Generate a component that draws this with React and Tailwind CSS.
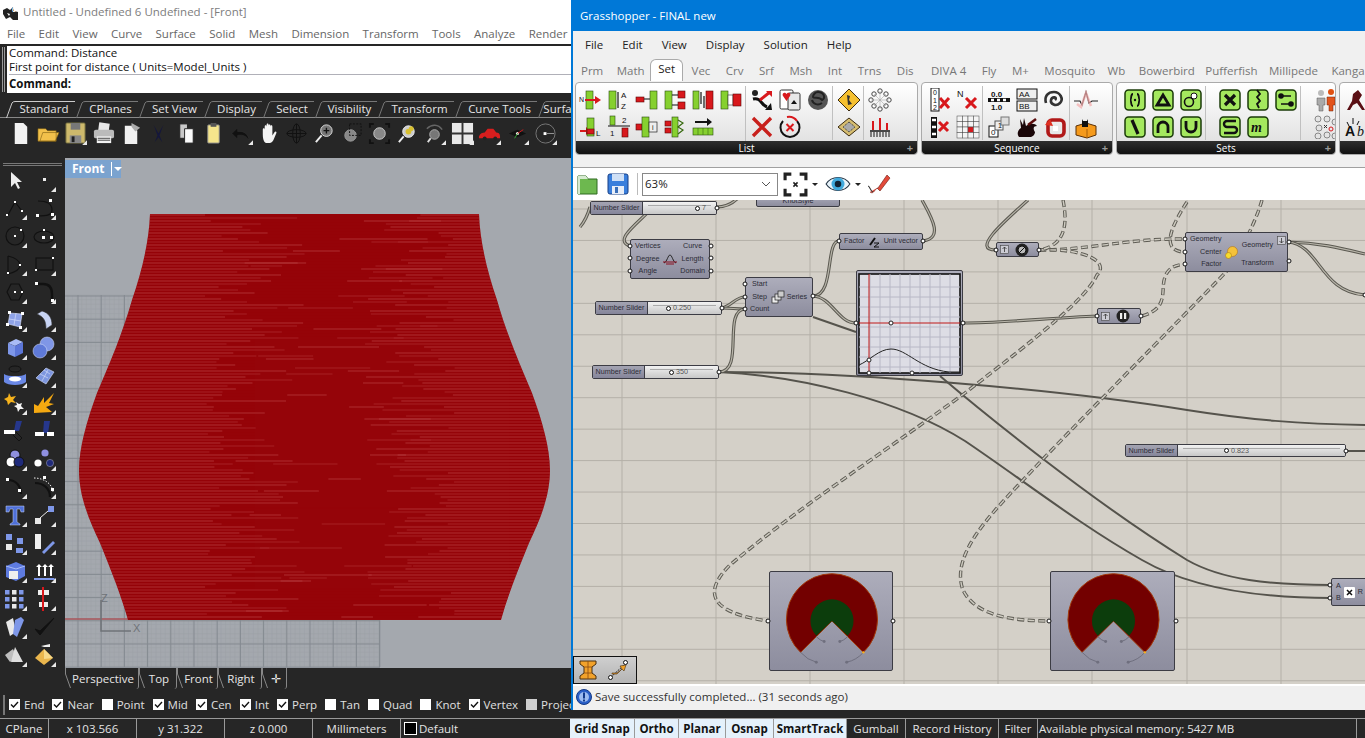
import React from 'react';

const UI = "font-['Open_Sans','Noto_Sans',sans-serif]";
const G = '#86d02f';
const R = '#d8181c';

// small wrapper for toolbar drawings, tri = the flyout corner on rhino buttons
const Ico = ({ children, size = 24, tri }) => (
  <svg width={size} height={size} viewBox="0 0 24 24" className="block">
    {children}
    {tri && <polygon points="24,19 24,24 19,24" fill="#e8e8e8" />}
  </svg>
);

const Txt = ({ x, y, s = 7, f = '#111', w = 400, children }) => (
  <text x={x} y={y} fontSize={s} fill={f} fontWeight={w} fontFamily="Liberation Sans, sans-serif">
    {children}
  </text>
);

const Bar = ({ x, y, w, h, f = G }) => <rect x={x} y={y} width={w} height={h} fill={f} stroke="#2a4a10" strokeWidth="0.6" />;
const Rd = ({ x, y, w, h }) => <rect x={x} y={y} width={w} height={h} fill={R} stroke="#5a0808" strokeWidth="0.6" />;
const Arr = ({ d, c = '#111', w = 1.2 }) => <path d={d} fill="none" stroke={c} strokeWidth={w} />;

/* rhino left sidebar */
const blue = '#7e97e8';
const sideIcons = [
  <path d="M8 4v15l4-4 3 6 2-1-3-6h5z" fill="#eee" />,
  <rect x="11" y="10" width="3" height="3" fill="#eee" />,
  <g><Arr d="M5 19L12 6l7 9" /><rect x="3" y="18" width="2" height="2" fill="#fff" /><rect x="11" y="5" width="2" height="2" fill="#fff" /><rect x="18" y="14" width="2" height="2" fill="#fff" /></g>,
  <g><Arr d="M6 5c10 0 14 4 14 9s-5 6-14 6" /><rect x="4" y="18" width="3" height="3" fill="#fff" /><rect x="17" y="3" width="3" height="3" fill="#fff" /><rect x="19" y="17" width="3" height="3" fill="#fff" /></g>,
  <g><circle cx="12" cy="12" r="9" fill="none" stroke="#111" strokeWidth="1.2" /><rect x="11" y="11" width="2" height="2" fill="#fff" /><rect x="17" y="5" width="2" height="2" fill="#fff" /></g>,
  <g><ellipse cx="12" cy="13" rx="10" ry="6" fill="none" stroke="#111" strokeWidth="1.2" /><rect x="11" y="5" width="2" height="2" fill="#fff" /><rect x="10" y="12" width="3" height="3" fill="#fff" /><rect x="18" y="12" width="3" height="3" fill="#fff" /></g>,
  <g><Arr d="M5 4c8 2 12 5 12 9s-4 7-12 9V4" /><rect x="4" y="20" width="2" height="2" fill="#fff" /><rect x="16" y="12" width="2" height="2" fill="#fff" /></g>,
  <g><rect x="4" y="6" width="17" height="12" fill="none" stroke="#111" strokeWidth="1.2" /><rect x="3" y="17" width="2" height="2" fill="#fff" /><rect x="20" y="5" width="2" height="2" fill="#fff" /></g>,
  <g><path d="M4 12l4-8h8l4 8-4 8H8z" fill="none" stroke="#111" strokeWidth="1.2" /><rect x="11" y="11" width="2" height="2" fill="#fff" /><rect x="18" y="11" width="2" height="2" fill="#fff" /></g>,
  <g><path d="M5 4h6c6 0 9 4 9 10v6" fill="none" stroke="#111" strokeWidth="2.4" /><rect x="3" y="2" width="3" height="3" fill="#fff" /><rect x="19" y="19" width="3" height="3" fill="#fff" /></g>,
  <g><path d="M7 5l12 1-2 13-12-3z" fill="#8fa3e8" stroke="#dfe6ff" strokeWidth="0.6" /><path d="M13 5l-2 12M6 11l12 2" stroke="#dfe6ff" strokeWidth="0.6" /><rect x="5" y="3" width="3" height="3" fill="#fff" /><rect x="18" y="4" width="3" height="3" fill="#fff" /><rect x="3" y="15" width="3" height="3" fill="#fff" /><rect x="16" y="18" width="3" height="3" fill="#fff" /></g>,
  <path d="M5 6l5-3c7 2 10 7 10 14l-6 4c0-8-2-12-9-15z" fill="#c8d4f4" stroke="#333" strokeWidth="0.6" />,
  <g><path d="M5 7l8-4 7 3-8 4z" fill="#a9bcf6" /><path d="M5 7l7 3v11l-7-3z" fill={blue} /><path d="M12 10l8-4v11l-8 4z" fill="#5c76d8" /></g>,
  <g><circle cx="15" cy="8" r="7" fill="#7f96e6" stroke="#dfe6ff" strokeWidth="0.5" /><circle cx="8" cy="15" r="7" fill="#5f7ad8" stroke="#dfe6ff" strokeWidth="0.5" /></g>,
  <g><ellipse cx="12" cy="5" rx="6" ry="3" fill="none" stroke="#111" /><path d="M1 10c4 3 18 3 22 0v8c-4 4-18 4-22 0z" fill="#6a88e6" /><ellipse cx="12" cy="15" rx="6" ry="2.6" fill="#fff" /></g>,
  <g><path d="M4 14l10-10 8 4-8 12z" fill="#7e97e0" stroke="#d8e0fa" strokeWidth="0.6" /><path d="M8 10l8 4M12 6l6 4M10 17l6-11" stroke="#d8e0fa" strokeWidth="0.6" /></g>,
  <g><path d="M6 2l2 4 5-1-3 4 3 3-5-1-3 3-1-4-3-2 4-2z" fill="#f5b21c" /><path d="M13 11l3 2 3-1-1 3 3 3-4 0-2 3-1-4-3-2 3-1z" fill="#f4f4f4" /></g>,
  <path d="M22 2L12 12l0-6-6 9-4-2 0 9 18-1-6-5 8-3-5-1z" fill="#f5a911" />,
  <g><path d="M13 2h6l-3 10h-5z" fill="#26378c" /><rect x="1" y="11" width="11" height="4" fill="#fff" /><path d="M13 13l6 6-3 3-6-6" fill="none" stroke="#111" /></g>,
  <g><path d="M12 2h6l-2 12h-5z" fill="#26378c" /><rect x="3" y="13" width="9" height="4" fill="#fff" /><rect x="15" y="13" width="7" height="4" fill="#fff" /></g>,
  <g><circle cx="12" cy="8" r="5" fill="#8f8fe0" stroke="#111" /><circle cx="8" cy="15" r="5" fill="#fff" stroke="#111" /><circle cx="16" cy="15" r="5" fill="#1f2a7a" stroke="#111" /></g>,
  <g><circle cx="13" cy="6" r="3.6" fill="#8f8fe0" /><circle cx="6" cy="16" r="3.6" fill="#fff" /><circle cx="18" cy="16" r="3.6" fill="#1f2a7a" stroke="#aab" strokeWidth="0.5" /></g>,
  <g><Arr d="M5 5c8 0 13 6 13 14" w={2.2} /><rect x="3" y="3" width="3" height="3" fill="#fff" /><rect x="15" y="14" width="3" height="3" fill="#fff" /></g>,
  <g><Arr d="M3 8c8 0 15 5 15 14" w={2.2} /><path d="M2 3c10 0 19 6 19 15" fill="none" stroke="#eee" strokeDasharray="1.5 1.5" /><rect x="11" y="1" width="3" height="3" fill="#fff" /><rect x="19" y="13" width="3" height="3" fill="#fff" /></g>,
  <g><path d="M3 3h18v6h-3l-1-3h-3v13l3 2v1H7v-1l3-2V6H7L6 9H3z" fill="#4f70d8" stroke="#c8d4f4" strokeWidth="0.5" /></g>,
  <g><rect x="3" y="15" width="6" height="6" fill="#e8e8e8" /><rect x="16" y="3" width="6" height="6" fill={blue} /><path d="M8 15l8-7" stroke="#eee" /></g>,
  <g><rect x="3" y="3" width="6" height="6" fill={blue} /><rect x="14" y="7" width="6" height="6" fill={blue} /><rect x="3" y="13" width="6" height="6" fill="#e8e8e8" /><rect x="13" y="17" width="7" height="5" fill={blue} /></g>,
  <g><rect x="3" y="3" width="6" height="15" fill="#f0f0f0" /><path d="M10 21l11-11 2 2-11 11z" fill={blue} /></g>,
  <g><path d="M3 7l10-4 9 4v10l-9 5-10-4z" fill="#5e7be0" /><path d="M3 7l10 3 9-3" fill="none" stroke="#a9bcf6" /><rect x="6" y="12" width="9" height="8" fill="#eee" /></g>,
  <g><path d="M7 5l3 3H8v9H6V8H4zM13 5l3 3h-2v9h-2V8h-2zM19 5l3 3h-2v9h-2V8h-2z" fill="#fff" /><path d="M2 19h20l2 2H2z" fill={blue} /></g>,
  <g>{[3, 10, 17].map((y) => [2, 9, 16].map((x, i) => <rect key={`${x}${y}`} x={x} y={y} width="4.5" height="4.5" fill={i === 1 ? '#e8e8e8' : blue} />))}</g>,
  <g><rect x="6" y="3" width="11" height="5" fill="#eee" /><rect x="7" y="15" width="9" height="5" fill="#eee" /><path d="M11 0v24" stroke={R} strokeWidth="2" /></g>,
  <g><path d="M3 7l7-4 3 14-6 4z" fill="#e8e8e8" /><path d="M12 5l6-3 3 3-7 17-4-3z" fill={blue} /></g>,
  <path d="M3 14l5 6L22 3 8 16z" fill="#111" stroke="#111" />,
  <g><path d="M2 12l8-6 4 8-7 5z" fill="#bdbdbd" /><path d="M12 4l8 15h-12z" fill="#dedede" /></g>,
  <g><path d="M12 6l9 9-9 7-9-7z" fill="#eab64d" /><path d="M12 6l9 9-9 1z" fill="#f7d98a" /><path d="M9 3l9-2v3h-6z" fill="#eee" /></g>,
];

const topIcons = [
  [<path d="M6 1h9l4 4v18H6z" fill="#f2f2f2" />, false],
  [<path d="M1 20V7h8l2 2h9v11zM3 20l3-9h17l-4 9z" fill="#f2c14b" stroke="#7a5a10" strokeWidth="0.6" />, false],
  [<g><rect x="2" y="1" width="20" height="21" rx="1" fill="#cdb96c" stroke="#6f6a3c" /><rect x="7" y="1" width="10" height="7" fill="#777" /><rect x="6" y="14" width="12" height="8" fill="#888" /><rect x="8" y="15" width="3" height="6" fill="#222" /></g>, true],
  [<g><rect x="7" y="1" width="11" height="8" fill="#e8e8e8" transform="rotate(8 12 5)" /><rect x="2" y="8" width="21" height="9" rx="2" fill="#bbb" /><rect x="5" y="15" width="15" height="7" fill="#f2f2f2" /><path d="M6 17h13M6 19h13" stroke="#444" /></g>, false],
  [<g><path d="M5 4h8l5 5v14H5z" fill="#f0f0f0" /><path d="M12 1l9 5-5 4-4-5z" fill="#aaa" /></g>, false],
  [<path d="M7 3l5 9 5-9-4 11 3 7-4-5-4 5 3-7z" fill="#14163c" />, false],
  [<g><path d="M5 2h8v15H5z" fill="#c8c8c8" stroke="#222" /><path d="M10 7h9v15h-9z" fill="#fafafa" stroke="#222" /></g>, false],
  [<g><rect x="6" y="3" width="12" height="19" rx="1" fill="#f5e58c" stroke="#888" /><rect x="9" y="1" width="6" height="4" fill="#555" /></g>, false],
  [<path d="M2 12l6-6v4c7-1 11 3 12 9-3-4-6-6-12-5v4z" fill="#111" stroke="#333" strokeWidth="0.5" />, true],
  [<path d="M5 14V8c0-2 2-2 2 0V5c0-2 2-2 2 0V3c0-2 2-2 2 0v1c0-2 2-2 2 0v1c0-2 2-2 2 0v9l2-3c1-2 3-1 2 1l-3 7c-1 2-3 3-5 3H9c-2 0-4-3-4-9z" fill="#f4f4f4" />, false],
  [<g><ellipse cx="12" cy="12" rx="10" ry="4" fill="none" stroke="#111" /><ellipse cx="12" cy="12" rx="4" ry="10" fill="none" stroke="#111" /><path d="M2 12h20M12 2v20" stroke="#111" /></g>, false],
  [<g><circle cx="14" cy="9" r="6" fill="#777" stroke="#ddd" /><path d="M9 14l-6 7" stroke="#eee" strokeWidth="2" /><path d="M11 9h6M14 6v6" stroke="#111" strokeWidth="1.4" /></g>, false],
  [<g><circle cx="11" cy="14" r="6" fill="#888" stroke="#999" /><rect x="10" y="2" width="12" height="12" fill="none" stroke="#111" strokeDasharray="2 1.5" /></g>, false],
  [<g><circle cx="12" cy="12" r="6" fill="#888" stroke="#ccc" /><path d="M2 6V2h4M22 6V2h-4M2 18v4h4M22 18v4h-4" fill="none" stroke="#111" strokeWidth="2" /></g>, false],
  [<g><circle cx="13" cy="10" r="6" fill="#ccc" stroke="#eee" /><circle cx="13" cy="10" r="3" fill="#d8c030" /><circle cx="16" cy="7" r="2.6" fill="#d8c030" /><path d="M8 15l-5 6" stroke="#eee" strokeWidth="2" /></g>, false],
  [<g><path d="M4 7c5-5 12-5 16 1" fill="none" stroke="#666" strokeWidth="1.5" /><circle cx="12" cy="13" r="5" fill="#777" stroke="#aaa" /><path d="M8 17l-3 4" stroke="#ddd" strokeWidth="2" /></g>, true],
  [<g><rect x="1" y="1" width="22" height="22" fill="#e8e8e8" /><path d="M12 1v22M1 12h22" stroke="#333" strokeWidth="2" /></g>, true],
  [<g><path d="M1 15c1-3 4-4 6-4l3-4h6l3 4c2 0 4 1 4 4v2H1z" fill="#d81e1e" /><circle cx="7" cy="17" r="2" fill="#222" /><circle cx="18" cy="17" r="2" fill="#222" /></g>, true],
  [<g><path d="M3 12l9-4 9 4-9 4z" fill="#111" /><circle cx="12" cy="12" r="1.6" fill="#eee" /><path d="M12 12l6-4" stroke={R} /><path d="M12 12l-3 5" stroke="#3a3" /></g>, true],
  [<g><circle cx="12" cy="12" r="10" fill="none" stroke="#777" /><rect x="10" y="10.6" width="3" height="3" fill="#fff" /><path d="M13 12h8" stroke="#999" /></g>, true],
];

/* grasshopper ribbon */
const Tile = ({ children }) => (
  <g>
    <rect x="2" y="2" width="20" height="20" rx="3.5" fill="#a4e85e" stroke="#1a3a08" strokeWidth="1.5" />
    {children}
  </g>
);

const listIcons = [
  [
    <g><Txt x="0" y="14" s={7}>N</Txt><Bar x="7" y="3" w="7" h="18" /><path d="M6 11h10V8l6 4-6 4v-3H6z" fill={R} /></g>,
    <g><Bar x="2" y="3" w="7" h="18" /><Txt x="14" y="10" s={8}>A</Txt><Txt x="14" y="21" s={8}>Z</Txt><Arr d="M11 4v16" /></g>,
    <g><Rd x="1" y="9" w="8" h="5" /><Arr d="M9 11h6" /><Bar x="15" y="3" w="7" h="18" /></g>,
    <g><Bar x="2" y="3" w="7" h="18" /><Rd x="15" y="3" w="7" h="7" /><Rd x="15" y="14" w="7" h="7" /><Arr d="M9 7h6M9 17h6" /></g>,
    <g><Bar x="2" y="3" w="6" h="18" /><Arr d="M10 4v12M13 8v12" /><Rd x="15" y="3" w="7" h="18" /></g>,
    <g><Bar x="2" y="3" w="7" h="18" /><rect x="9" y="7" width="5" height="10" fill="#fff" stroke="#333" strokeWidth="0.6" /><Rd x="14" y="6" w="8" h="12" /></g>,
  ],
  [
    <g><path d="M1 15h6v-3l5 4-5 4v-3H1z" fill={R} /><Bar x="8" y="3" w="7" h="18" /><Rd x="8" y="14" w="7" h="5" /><Txt x="17" y="21" s={8}>L</Txt></g>,
    <g><Bar x="3" y="1" w="5" h="9" /><Txt x="15" y="8" s={8}>2</Txt><Arr d="M1 11h22" /><Txt x="3" y="21" s={8}>1</Txt><Rd x="15" y="13" w="6" h="9" /></g>,
    <g><Rd x="1" y="9" w="6" h="6" /><Bar x="7" y="2" w="7" h="20" /><rect x="14" y="7" width="8" height="10" fill="#eee" stroke="#222" strokeWidth="0.7" /><Txt x="17" y="15" s={7}>i</Txt></g>,
    <g><Rd x="2" y="6" w="6" h="5" /><Rd x="2" y="13" w="6" h="5" /><Bar x="9" y="2" w="6" h="20" /><Arr d="M15 5l5 3-5 4 5 3-5 4" c="#386a10" /></g>,
    <g><path d="M4 6h12V3l5 4-5 4V8H4z" fill="#111" /><Bar x="2" y="13" w="20" h="7" /><path d="M7 13v7M12 13v7M17 13v7" stroke="#3a6a12" strokeWidth="0.6" /></g>,
  ],
];
const listB = [
  [
    <g><circle cx="5" cy="5" r="3" fill="#222" /><path d="M3 11c8-2 8 6 14 8" fill="none" stroke="#111" strokeWidth="3" /><path d="M10 12L20 4" stroke={R} strokeWidth="3" /><path d="M16 3h6v6z" fill={R} /><path d="M15 22l7 0-1-7z" fill="#111" /></g>,
    <g><rect x="2" y="2" width="13" height="19" rx="1.5" fill="#fff" stroke="#333" /><rect x="10" y="5" width="12" height="17" rx="1.5" fill="#e8e8e8" stroke="#333" /><path d="M8.5 6c-2-3-5 0-3.500 2l3.500 5 3.500-5c1.500-2-1.500-5-3.500-2z" fill={R} /><path d="M16 12l3 4h-6z" fill="#111" /></g>,
    <g><circle cx="12" cy="12" r="10" fill="#555" /><path d="M12 4c6 0 8 6 4 8-3-4-8-1-9-3 0-2 2-5 5-5zM6 12c1 4 6 6 10 3" fill="none" stroke="#222" strokeWidth="2" /></g>,
  ],
  [
    <path d="M3 3l18 18M21 3L3 21" stroke="#c8201c" strokeWidth="3.4" />,
    <g><path d="M5 6a9.500 9.500 0 1 0 14 0" fill="none" stroke="#111" strokeWidth="2" /><path d="M9 2a10 10 0 0 1 10 4" fill="none" stroke={R} strokeWidth="2" /><path d="M8.500 9l7 7M15.500 9l-7 7" stroke={R} strokeWidth="2" /></g>,
  ],
];
const yellowDiamond = <g><path d="M12 1l11 11-11 11L1 12z" fill="#f5c030" stroke="#3a2a10" /><path d="M10 7l3 1-1 4 3 4-4 1z" fill="#333" /></g>;
const tanBox = <g><path d="M12 3l11 9-11 9L1 12z" fill="#d6bd70" stroke="#3a2a10" /><path d="M12 7l6 5-6 5-6-5z" fill="#aaa" stroke="#333" strokeDasharray="1 1" /></g>;
const netDots = <g>{[[12, 3], [18, 6], [21, 12], [18, 18], [12, 21], [6, 18], [3, 12], [6, 6]].map(([x, y]) => <circle key={`${x}-${y}`} cx={x} cy={y} r="2.2" fill="#fff" stroke="#444" />)}<path d="M12 3v18M3 12h18M6 6l12 12M18 6L6 18" stroke="#999" strokeWidth="0.5" /></g>;
const redBars = <g><path d="M5 6v9M12 3v12M19 8v7" stroke={R} strokeWidth="2" /><path d="M2 16h20" stroke="#111" strokeWidth="1.4" /><path d="M3 17v5M6 17v5M9 17v5M12 17v5M15 17v5M18 17v5M21 17v5" stroke="#111" /></g>;

const seqIcons = [
  [
    <g><rect x="3" y="0" width="8" height="23" fill="#fff" stroke="#111" /><Txt x="5" y="7" s={7}>0</Txt><Txt x="5" y="15" s={7}>1</Txt><Txt x="5" y="22" s={7}>2</Txt><path d="M12 10l9 10M21 10l-9 10" stroke={R} strokeWidth="3" /></g>,
    <g><Txt x="1" y="9" s={9}>N</Txt><path d="M10 10l10 10M20 10L10 20" stroke={R} strokeWidth="3" /></g>,
    <g><Txt x="4" y="9" s={8} w={700}>0.0</Txt><rect x="1" y="10" width="22" height="4" fill="#111" /><path d="M4 12h3M10 12h3M16 12h3" stroke="#fff" strokeWidth="2.5" /><Txt x="4" y="22" s={8} w={700}>1.0</Txt></g>,
    <g><rect x="2" y="1" width="20" height="10" fill="#eee" stroke="#111" /><rect x="2" y="13" width="20" height="10" fill="#eee" stroke="#111" /><Txt x="4" y="9" s={8}>AA</Txt><Txt x="4" y="21" s={8}>BB</Txt></g>,
    <g><path d="M12 12c3-3-3-4-4 0s5 7 9 3 0-11-6-11S1 8 3 15" fill="none" stroke="#333" strokeWidth="2.6" /></g>,
  ],
  [
    <g><rect x="3" y="2" width="6" height="21" fill="#111" /><path d="M4 5h4M4 12h4M4 19h4" stroke="#fff" strokeWidth="2.5" /><path d="M11 7l9 9M20 7l-9 9" stroke={R} strokeWidth="3" /></g>,
    <g>{[0, 1, 2, 3].map((i) => [0, 1, 2, 3].map((j) => <rect key={`${i}${j}`} x={1 + i * 5.500} y={1 + j * 5.500} width="5.500" height="5.500" fill={i === 2 && j === 2 ? R : '#f4f4f4'} stroke="#444" strokeWidth="0.5" />))}</g>,
    <g><rect x="2" y="11" width="9" height="11" fill="#fff" stroke="#111" /><rect x="8" y="6" width="8" height="9" fill="#eee" stroke="#555" /><rect x="14" y="2" width="8" height="8" fill="#ddd" stroke="#777" /><Txt x="4" y="20" s={8}>0</Txt><Txt x="11" y="13" s={7}>1</Txt></g>,
    <g><path d="M4 22c-3-4 0-8 2-9L5 4l3 6 1-7 2 8c4-3 9-3 11 0-4 0-4 3-2 6 0 3-3 5-5 5z" fill="#1a0608" /><path d="M13 10l8-6" stroke="#5a0a0a" strokeWidth="2.500" /></g>,
    <g><rect x="5" y="5" width="16" height="16" rx="4" fill="none" stroke="#b01818" strokeWidth="3.600" /><path d="M2 10l5-6 3 7z" fill="#e03020" /><path d="M10 11h5v5h-5z" fill="#fff" /></g>,
  ],
];
const wave = <g><path d="M0 13h6l2 4 4-13 3 11 3-2h6" fill="none" stroke="#222" strokeWidth="1.200" /><path d="M3 16l4 3 5-14 5 13" fill="none" stroke="#f4aaaa" strokeWidth="2.500" opacity="0.7" /></g>;
const catBox = <g><path d="M2 11l10-3 10 3v9l-9 3-11-3z" fill="#f59a1c" stroke="#5a3008" /><path d="M13 14v9" stroke="#a86008" /><path d="M8 4l1 2h4l1-2v8H8z" fill="#111" /></g>;

const G1 = <path d="M10 6c-3 0-1 6-3 6 2 0 0 6 3 6M14 6c3 0 1 6 3 6-2 0 0 6-3 6" fill="none" stroke="#111" strokeWidth="1.800" />;
const setTiles = [
  [
    <Tile>{G1}<circle cx="12" cy="12" r="1.200" fill="#111" /></Tile>,
    <Tile><path d="M12 7l6 10H6z" fill="none" stroke="#111" strokeWidth="2.800" /></Tile>,
    <Tile><circle cx="15" cy="8" r="3" fill="#fff" stroke="#111" /><circle cx="10" cy="14" r="4.500" fill="none" stroke="#111" strokeWidth="1.600" /></Tile>,
    <Tile><path d="M7 7l10 10M17 7L7 17" stroke="#111" strokeWidth="3.200" /></Tile>,
    <Tile><path d="M11 2l3 4-3 3 3 4-3 3 2 4" fill="none" stroke="#111" strokeWidth="1.800" /></Tile>,
    <Tile><path d="M7 8h10M7 16h10" stroke="#111" strokeWidth="1.400" /><circle cx="7" cy="8" r="2.800" fill="#111" /><circle cx="17" cy="16" r="2.800" fill="#111" /></Tile>,
  ],
  [
    <Tile><path d="M9 5l6 14" stroke="#111" strokeWidth="3.200" /></Tile>,
    <Tile><path d="M7 18v-6a5 5 0 0 1 10 0v6" fill="none" stroke="#111" strokeWidth="2.800" /></Tile>,
    <Tile><path d="M7 6v6a5 5 0 0 0 10 0V6" fill="none" stroke="#111" strokeWidth="2.800" /></Tile>,
    <Tile><path d="M18 6H9a3 3 0 0 0 0 6h7a3 3 0 0 1 0 6H6" fill="none" stroke="#111" strokeWidth="2.400" /></Tile>,
    <Tile><text x="5" y="17" fontSize="14" fontStyle="italic" fontWeight="700" fontFamily="Liberation Serif, serif" fill="#111">m</text></Tile>,
  ],
];
const people = <g><circle cx="7" cy="5" r="3" fill="#bbb" /><path d="M3 10h8v7H9v6H5v-6H3z" fill="#aaa" stroke="#555" strokeWidth="0.5" /><circle cx="17" cy="4" r="3" fill="#e05010" /><path d="M13 9h8v8h-2v6h-4v-6h-2z" fill="#e2541c" stroke="#6a2008" strokeWidth="0.5" /></g>;
const dotsX = <g>{[[4, 4], [13, 4], [21, 7], [5, 13], [4, 21], [13, 20], [21, 21]].map(([x, y]) => <circle key={`${x}${y}`} cx={x} cy={y} r="3" fill="#e4e4e4" stroke="#888" />)}<circle cx="17" cy="14" r="2" fill="none" stroke={R} /><path d="M10 10l3 3M13 10l-3 3" stroke="#333" /></g>;

const Cell = ({ children }) => (
  <span className="w-[28px] h-[27px] flex items-center justify-center">
    <Ico size={24}>{children}</Ico>
  </span>
);

const RibbonGroup = ({ rows, cols, sep = true }) => (
  <div className={`flex flex-col ${sep ? 'border-r border-[#c0c0c0]' : ''}`}>
    {rows.map((row, i) => (
      <div key={i} className="flex">
        {row.map((ic, j) => <Cell key={j}>{ic}</Cell>)}
        {Array.from({ length: cols - row.length }).map((_, j) => <span key={j} className="w-[28px]" />)}
      </div>
    ))}
  </div>
);

const Panel = ({ label, className, children }) => (
  <div className={`${className} h-[73px] shrink-0 rounded-[4px] border border-[#aaa] bg-gradient-to-b from-white to-[#dcdcdc] flex flex-col overflow-hidden`}>
    <div className="flex-1 flex pt-[3px] pl-[1px]">{children}</div>
    <div className="h-[13px] bg-gradient-to-b from-[#2e2e2e] to-[#111] rounded-b-[3px] flex items-center justify-center relative text-[10px] text-white leading-none">
      {label}
      {label && <span className="absolute right-[4px] top-[1px] text-[#999] text-[11px] font-bold leading-[11px]">+</span>}
    </div>
  </div>
);

/* canvas pieces */
const Node = ({ className, children }) => (
  <div className={`absolute ${className} rounded-[2px] border border-[#3c3c44] bg-gradient-to-b from-[#adadbb] to-[#8d8d9e] text-[#2c2c36] text-[7.200px] leading-[12.500px] font-['Liberation_Sans',sans-serif]`}>
    {children}
  </div>
);

const Slider = ({ className, value, pct }) => (
  <div className={`absolute ${className} flex rounded-[2px] border border-[#3c3c44] text-[7.200px] leading-none font-['Liberation_Sans',sans-serif] overflow-hidden whitespace-nowrap`}>
    <span className="w-[52px] shrink-0 bg-gradient-to-b from-[#a4a4b2] to-[#85859a] border-r border-[#3c3c44] text-[#2c2c36] flex items-center justify-center">Number Slider</span>
    <span className="flex-1 relative bg-gradient-to-b from-[#f2f2f2] to-[#c8c8c8] flex items-center text-[#555]">
      <span className="absolute left-[5px] right-[5px] top-[3px] border-t border-[#aaa]" />
      <span className={`absolute ${pct} w-[5px] h-[5px] rounded-full border border-[#111] bg-white`} />
      <span className={`absolute ${pct} pl-[7px]`}>{value}</span>
    </span>
  </div>
);

const Gauge = ({ className }) => (
  <Node className={className}>
    <svg width="100%" height="100%" viewBox="0 0 124 100" className="block">
      <path d="M31 82A46.500 46.500 0 1 1 95 82L63 50Z" fill="#730000" stroke="#a33a0a" strokeWidth="1" />
      <path d="M47 65A22 22 0 1 1 79 65L63 50Z" fill="#0c3d0c" />
      <path d="M31 82Q38 90 47 92M95 82Q88 90 78 92M47 66Q51 70 55 71M79 66Q75 70 71 71" fill="none" stroke="#6f6f7e" />
      <g fill="#6f6f7e"><circle cx="47" cy="92" r="1.500" /><circle cx="78" cy="92" r="1.500" /><circle cx="55" cy="71" r="1.500" /><circle cx="71" cy="71" r="1.500" /></g>
      <circle cx="95" cy="82" r="1.200" fill="#f5b021" />
    </svg>
  </Node>
);

const gridXs = [622, 716, 810, 904, 998, 1092, 1187, 1281];
const gridYs = Array.from({ length: 16 }, (_, i) => 209 + i * 31.45);

const dashed = [
  'M1039 250C1090 250 1130 238 1185 239',
  'M1039 250C1085 248 1110 262 1097 275C1085 300 1040 335 965 393C880 455 795 510 730 565C705 590 705 612 768 621',
  'M1187 202C1172 225 1160 250 1183 252',
  'M1142 316C1170 308 1160 290 1165 277C1168 268 1175 265 1185 264',
  'M1262 200C1255 225 1235 262 1225 273C1180 320 1070 430 1025 478C990 515 950 555 963 590C975 615 1010 621 1050 621',
  'M1063 200C1068 225 1065 245 1040 250',
];
const doubled = [
  'M813 296C835 296 825 241 839 241',
  'M923 241C945 238 930 215 922 200',
  'M722 308C732 306 735 297 745 297',
  'M722 308C732 308 735 309 745 309',
  'M719 372C745 372 722 310 745 309',
  'M813 296C832 297 838 323 856 323',
  'M963 323C1000 323 1050 318 1097 316',
  'M1028 200C1000 225 972 250 996 250',
  'M1288 242C1320 243 1340 248 1365 254',
  'M1288 242C1320 245 1320 292 1365 295',
  'M655 205C640 222 612 240 630 246',
  'M717 207C725 207 732 204 738 198',
  'M580 227C586 220 588 214 590 207',
];
const single = [
  'M719 372C850 372 1050 388 1187 410C1250 420 1300 424 1365 425',
  'M719 372C800 376 900 400 965 441C1020 478 1080 525 1142 560C1180 582 1240 598 1331 598',
  'M813 317L856 332',
  'M940 376C980 410 1090 500 1187 560C1222 580 1270 585 1331 585',
  'M1346 451H1365',
];
const ports = [
  [717, 208], [630, 246], [630, 258], [630, 271], [711, 246], [711, 258], [711, 271], [839, 241], [923, 241],
  [722, 308], [745, 284], [745, 297], [745, 309], [813, 296], [856, 323], [963, 323], [719, 372], [996, 250],
  [1039, 250], [1097, 316], [1141, 316], [1185, 239], [1185, 252], [1185, 264], [1289, 242], [1289, 261], [1346, 451],
  [768, 621], [893, 621], [1049, 621], [1176, 621], [1330, 585], [1330, 598], [1365, 295],
];

const Canvas = () => (
  <div className="relative h-[484px] overflow-hidden bg-[#d4d0c8]">
    <svg width="792" height="484" viewBox="573 200 792 484" className="absolute left-0 top-0">
      {gridXs.map((x) => <path key={x} d={`M${x} 200V684`} stroke="#b4b0a8" />)}
      {gridYs.map((y) => <path key={y} d={`M573 ${y}H1365`} stroke="#b4b0a8" />)}
      {single.map((d) => <path key={d} d={d} fill="none" stroke="#55534c" strokeWidth="2" />)}
      {doubled.map((d) => (
        <g key={d}>
          <path d={d} fill="none" stroke="#5a5850" strokeWidth="3.200" />
          <path d={d} fill="none" stroke="#b8b5aa" strokeWidth="1.200" />
        </g>
      ))}
      {dashed.map((d) => (
        <g key={d}>
          <path d={d} fill="none" stroke="#5e5c54" strokeWidth="3.400" strokeDasharray="7 3.500" />
          <path d={d} fill="none" stroke="#cfccc2" strokeWidth="1.400" strokeDasharray="6 4.500" strokeDashoffset="-0.500" />
        </g>
      ))}
    </svg>

    <Slider className="left-[17px] top-[1px] w-[127px] h-[14px]" value="7" pct="left-[52px]" />
    <Slider className="left-[22px] top-[101px] w-[127px] h-[14px]" value="0.250" pct="left-[18px]" />
    <Slider className="left-[19px] top-[165px] w-[127px] h-[14px]" value="350" pct="left-[24px]" />
    <Slider className="left-[552px] top-[244px] w-[221px] h-[13px]" value="0.823" pct="left-[46px]" />

    <Node className="left-[183px] top-[-6px] w-[84px] h-[13px] text-center leading-[11px]">KnotStyle</Node>

    <Node className="left-[57px] top-[39px] w-[80px] h-[40px] flex justify-between px-[4px]">
      <div className="text-center"><div>Vertices</div><div>Degree</div><div>Angle</div></div>
      <svg width="14" height="12" viewBox="0 0 14 12" className="self-center"><path d="M1 10C4 9 5 2 7 2s3 7 6 8" fill="none" stroke="#222" /><path d="M0 9h14M3 11h8" stroke="#8a1020" strokeWidth="1.200" /></svg>
      <div className="text-center"><div>Curve</div><div>Length</div><div>Domain</div></div>
    </Node>

    <Node className="left-[266px] top-[33px] w-[84px] h-[17px] flex items-center justify-between px-[4px]">
      <span>Factor</span>
      <svg width="12" height="12" viewBox="0 0 12 12"><path d="M2 9l5-7" stroke="#111" strokeWidth="2" /><path d="M6 7h5l-5 4h5" fill="none" stroke="#111" /></svg>
      <span>Unit vector</span>
    </Node>

    <Node className="left-[172px] top-[77px] w-[68px] h-[40px] flex items-center justify-between pl-[4px] pr-[5px]">
      <div className="text-center"><div>Start</div><div>Step</div><div>Count</div></div>
      <svg width="14" height="14" viewBox="0 0 14 14"><rect x="1" y="7" width="6" height="6" fill="#eee" stroke="#222" strokeWidth="0.7" /><rect x="4" y="4" width="6" height="6" fill="#ddd" stroke="#222" strokeWidth="0.7" /><rect x="7" y="1" width="6" height="6" fill="#ccc" stroke="#222" strokeWidth="0.7" /></svg>
      <span>Series</span>
    </Node>

    <Node className="left-[283px] top-[70px] w-[107px] h-[106px]">
      <svg width="105" height="104" viewBox="0 0 105 104" className="block">
        <rect x="2" y="3" width="101" height="99" fill="#dddde5" stroke="#111" strokeWidth="1.600" />
        {[13, 23, 33, 43, 53, 63, 73, 83, 93].map((v) => (
          <g key={v}>
            <path d={`M${v} 3V102`} stroke="#b8b8c6" />
            <path d={`M2 ${v + 3}H103`} stroke="#b8b8c6" />
          </g>
        ))}
        <path d="M12 3V102" stroke="#c01818" />
        <path d="M2 52H103" stroke="#c01818" />
        <path d="M2 94C12 90 22 78 34 78C50 78 62 98 92 101L103 101" fill="none" stroke="#222" strokeWidth="1" />
        <g fill="#fff" stroke="#222">
          <circle cx="34" cy="52" r="2" />
          <circle cx="12" cy="89" r="2" />
          <circle cx="12" cy="102" r="2" />
          <circle cx="55" cy="102" r="2" />
        </g>
      </svg>
    </Node>

    <Node className="left-[423px] top-[42px] w-[43px] h-[15px] flex items-center gap-[6px] pl-[3px]">
      <svg width="9" height="9" viewBox="0 0 9 9"><rect x="0.500" y="0.500" width="8" height="8" fill="#ccccd4" stroke="#444" strokeWidth="0.600" /><path d="M4.500 7V2M2.500 4l2-2 2 2" fill="none" stroke="#333" strokeWidth="0.800" /></svg>
      <svg width="14" height="14" viewBox="0 0 14 14"><circle cx="7" cy="7" r="6.500" fill="#222" /><circle cx="7" cy="7" r="4" fill="#bbb" stroke="#111" /><path d="M4 10l6-6" stroke="#111" /></svg>
    </Node>
    <Node className="left-[524px] top-[108px] w-[44px] h-[16px] flex items-center gap-[6px] pl-[3px]">
      <svg width="9" height="9" viewBox="0 0 9 9"><rect x="0.500" y="0.500" width="8" height="8" fill="#ccccd4" stroke="#444" strokeWidth="0.600" /><path d="M4.500 7V2M2.500 4l2-2 2 2" fill="none" stroke="#333" strokeWidth="0.800" /></svg>
      <svg width="14" height="14" viewBox="0 0 14 14"><circle cx="7" cy="7" r="6.500" fill="#222" /><rect x="4" y="4" width="2.200" height="6" fill="#eee" /><rect x="8" y="4" width="2.200" height="6" fill="#eee" /></svg>
    </Node>

    <Node className="left-[612px] top-[32px] w-[103px] h-[40px] flex justify-between pl-[3px] pr-[1px]">
      <div className="text-right pl-[1px]"><div>Geometry</div><div>Center</div><div>Factor</div></div>
      <svg width="13" height="13" viewBox="0 0 13 13" className="self-center"><circle cx="7.500" cy="5.500" r="5" fill="#f5c23a" stroke="#a86a10" strokeWidth="0.500" /><circle cx="3.500" cy="9.500" r="3" fill="#f7dc2c" stroke="#a86a10" strokeWidth="0.500" /></svg>
      <div className="pt-[3px] text-center leading-[18px]"><div>Geometry</div><div>Transform</div></div>
      <svg width="9" height="9" viewBox="0 0 9 9" className="mt-[3px]"><rect x="0.500" y="0.500" width="8" height="8" fill="#ccccd4" stroke="#444" strokeWidth="0.600" /><path d="M4.500 2v5M2.500 5l2 2 2-2" fill="none" stroke="#333" strokeWidth="0.800" /></svg>
    </Node>

    <Gauge className="left-[196px] top-[371px] w-[124px] h-[100px]" />
    <Gauge className="left-[477px] top-[371px] w-[125px] h-[100px]" />

    <Node className="left-[758px] top-[378px] w-[60px] h-[28px] flex items-center gap-[3px] pl-[4px]">
      <div className="leading-[12px]"><div>A</div><div>B</div></div>
      <span className="w-[11px] h-[11px] rounded-[1px] bg-white flex items-center justify-center">
        <svg width="7" height="7" viewBox="0 0 7 7"><path d="M1 1l5 5M6 1L1 6" stroke="#111" strokeWidth="1.500" /></svg>
      </span>
      <span>R</span>
    </Node>

    <div className="absolute left-0 top-[456px] w-[64px] h-[28px] border border-[#111] bg-gradient-to-b from-[#cfcfcf] to-[#b4b4b4] flex items-center gap-[7px] pl-[2px]">
      <svg width="24" height="24" viewBox="0 0 24 24"><path d="M4 3h16v3l-4 3v6l4 3v3H4v-3l4-3V9L4 6z" fill="#f2a22a" stroke="#4a3010" /><path d="M8 9h8M8 15h8M12 3v18" stroke="#8a4a10" strokeWidth="0.800" /></svg>
      <svg width="22" height="22" viewBox="0 0 22 22"><path d="M4 18L17 6" stroke="#222" strokeDasharray="2 1" /><path d="M5 14h5l5-4-2-3 6-1-2 6-2-2-5 5H5z" fill="#f2a22a" stroke="#4a3010" strokeWidth="0.600" /><circle cx="3.500" cy="18.500" r="2" fill="#fff" stroke="#111" /><circle cx="18.500" cy="3.500" r="2" fill="#fff" stroke="#111" /></svg>
    </div>

    <svg width="792" height="484" viewBox="573 200 792 484" className="absolute left-0 top-0 pointer-events-none">
      {ports.map(([x, y]) => <circle key={`${x}-${y}`} cx={x} cy={y} r="2" fill="#fff" stroke="#111" strokeWidth="1" />)}
    </svg>
  </div>
);

/* rhino front viewport, drawing only */
const vase = 'M150 214H479C480 240 486 268 497 300C507 335 520 365 532 393C542 420 550 448 550 470C550 495 541 518 529 543C518 570 508 595 501 620H128C121 595 111 570 100 543C88 518 79 495 79 470C79 448 87 420 97 393C109 365 122 335 132 300C143 268 149 240 150 214Z';

// stable noise so the red streaks don't line up in diagonals
const noise = (n) => {
  const s = Math.sin(n * 12.9898) * 43758.5453;
  return s - Math.floor(s);
};

const Viewport = () => {
  const rows = Array.from({ length: 135 }, (_, i) => 215 + i * 3);
  return (
    <div className="relative flex-1 bg-[#a4a8ae] overflow-hidden">
      <svg width="506" height="510" viewBox="65 158 506 510" className="absolute left-0 top-0">
        <defs><clipPath id="vase"><path d={vase} /></clipPath></defs>
        {Array.from({ length: 70 }, (_, i) => <path key={i} d={`M${67.800 + i * 4.640} 295V667`} stroke="#9ca0a6" strokeWidth="0.500" />)}
        {Array.from({ length: 81 }, (_, i) => <path key={i} d={`M65 ${295 + i * 4.640}H380`} stroke="#9ca0a6" strokeWidth="0.500" />)}
        {Array.from({ length: 14 }, (_, i) => <path key={i} d={`M${78 + i * 23.200} 295V667`} stroke="#858a91" />)}
        {Array.from({ length: 17 }, (_, i) => <path key={i} d={`M65 ${296 + i * 23.200}H380`} stroke="#858a91" />)}
        <path d="M380 295V667" stroke="#858a91" />
        <rect x="380.500" y="158" width="191" height="510" fill="#a4a8ae" />
        <path d="M65 619H130" stroke="#a8555a" strokeWidth="1.500" />
        <path d="M101 600V631H131" fill="none" stroke="#6f7378" strokeWidth="1.500" />
        <text x="101" y="602" fontSize="11" fill="#6f7378" fontFamily="Liberation Sans, sans-serif">Z</text>
        <text x="133" y="632" fontSize="11" fill="#6f7378" fontFamily="Liberation Sans, sans-serif">X</text>
        <path d={vase} fill="#950409" />
        <g clipPath="url(#vase)">
          {rows.map((y, i) => {
            const streak = noise(i + 900) > 0.65
              ? `M${230 + noise(i + 300) * 150} ${y}h${30 + noise(i + 700) * 60}`
              : '';
            return (
              <path
                key={y}
                d={`M60 ${y}H${205 + noise(i) * 100}M${365 + noise(i + 500) * 90} ${y}H560${streak}`}
                stroke="#b83c40"
                strokeWidth="0.800"
                opacity={i % 2 === 0 ? 0.95 : 0.65}
              />
            );
          })}
        </g>
      </svg>
      <div className="absolute left-0 top-[2px] h-[18px] w-[56px] bg-[#7ba3cf] text-white text-[12px] font-bold flex items-center pl-[7px] leading-none">
        Front
        <span className="ml-[6px] h-[14px] border-l border-white" />
        <span className="ml-[2px] w-0 h-0 border-x-[4px] border-x-transparent border-t-[4px] border-t-white" />
      </div>
    </div>
  );
};

const topTabs = [
  ['Standard', 'w-[70px]', 70], ['CPlanes', 'w-[63px]', 63], ['Set View', 'w-[65px]', 65], ['Display', 'w-[59px]', 59], ['Select', 'w-[52px]', 52],
  ['Visibility', 'w-[63px]', 63], ['Transform', 'w-[77px]', 77], ['Curve Tools', 'w-[83px]', 83], ['Surfa', 'w-[33px]', 33],
];
const rhinoMenu = ['File', 'Edit', 'View', 'Curve', 'Surface', 'Solid', 'Mesh', 'Dimension', 'Transform', 'Tools', 'Analyze', 'Render'];
const snaps = [
  ['End', 1], ['Near', 1], ['Point', 0], ['Mid', 1], ['Cen', 1], ['Int', 1], ['Perp', 1], ['Tan', 0], ['Quad', 0], ['Knot', 0], ['Vertex', 1], ['Project', 2],
];
const viewTabs = [['Perspective', 'w-[74px]'], ['Top', 'w-[38px]'], ['Front', 'w-[41px]'], ['Right', 'w-[44px]'], ['✛', 'w-[25px]']];

const Rhino = () => (
  <div className={`w-[571px] shrink-0 h-[718px] flex flex-col bg-[#262626] overflow-hidden text-[11.500px] ${UI}`}>
    <div className="h-[24px] bg-white flex items-center pl-[3px] gap-[5px] text-[#7d7d7d]">
      <svg width="15" height="15" viewBox="0 0 15 15">
        <path d="M0 5l4-2 3 2 3-3 1 4 4 1v8H10l-3-3-4 2-3-5z" fill="#222" />
        <path d="M4 8l3 1-1 2z" fill="#fff" />
        <text x="9" y="7" fontSize="7" fontWeight="700" fill="#fff" fontFamily="Liberation Sans, sans-serif">6</text>
      </svg>
      <span>Untitled - Undefined 6 Undefined - [Front]</span>
    </div>
    <div className="h-[20px] bg-white flex items-center pl-[7px] gap-[13.400px] text-[#666]">
      {rhinoMenu.map((m) => <span key={m}>{m}</span>)}
    </div>
    <div className="h-[2px]" />
    <div className="flex h-[47px]">
      <div className="w-[7px] flex justify-center gap-[1px] py-[1px]"><span className="border-l border-[#999]" /><span className="border-l border-[#999]" /></div>
      <div className="flex-1 bg-white leading-[14px] text-[#111] pl-[2px]">
        <div className="h-[14px]">Command: Distance</div>
        <div className="h-[14px]">First point for distance ( Units=Model_Units )</div>
        <div className="border-t border-[#b0b0b8] font-bold leading-[17px]">Command:</div>
      </div>
    </div>

    <div className="h-[65px] shrink-0">
      <div className="mt-[8px] h-[17px] flex pl-[6px] border-b border-[#888] text-[#e6e6e6]">
        {topTabs.map(([t, w, n], i) => (
          <span key={t} className={`${w} shrink-0 relative flex items-center justify-center leading-none pl-[6px]`}>
            <svg width={n} height="17" className="absolute left-0 top-0">
              <path d={`M0.500 17L6 2Q7 0.500 9 0.500H${n - 1}`} fill="none" stroke={i === 0 ? '#ccc' : '#777'} />
            </svg>
            {t}
          </span>
        ))}
      </div>
      <div className="flex pl-[7px] mt-[4px]">
        {topIcons.map(([ic, tri], i) => (
          <span key={i} className="w-[27.600px] shrink-0 flex justify-center">
            <Ico size={23} tri={tri}>{ic}</Ico>
          </span>
        ))}
      </div>
    </div>

    <div className="flex h-[510px] shrink-0">
      <div className="w-[65px] shrink-0 bg-[#262626] pt-[5px]">
        <div className="mx-[3px] h-[3px] border-y border-[#777]" />
        <div className="grid grid-cols-[29px_29px] auto-rows-[27.940px]">
          {sideIcons.map((ic, i) => (
            <span key={i} className="flex items-center justify-center">
              <Ico size={24} tri={i !== 0 && !(i >= 18 && i < 20) && i !== 33}>{ic}</Ico>
            </span>
          ))}
        </div>
      </div>
      <Viewport />
    </div>

    <div className="h-[24px] shrink-0 flex pl-[65px] text-[#e6e6e6]">
      {viewTabs.map(([t, w]) => (
        <span key={t} className={`${w} shrink-0 h-[21px] relative border-r border-[#888] rounded-br-[3px] flex items-center justify-center leading-none pl-[3px]`}>
          <svg width="6" height="21" className="absolute left-0 top-0"><path d="M0.500 0V6L5.500 20" fill="none" stroke="#888" /></svg>
          {t}
        </span>
      ))}
    </div>

    <div className="h-[25px] shrink-0 flex items-center pl-[3px] text-[#e0e0e0] whitespace-nowrap">
      <span className="w-[3px] h-[20px] border-x border-[#777] mr-[4px]" />
      {snaps.map(([s, on]) => (
        <span key={s} className="flex items-center gap-[4px] mr-[8px]">
          <span className={`w-[11px] h-[11px] flex items-center justify-center ${on === 2 ? 'bg-[#cfcfcf]' : 'bg-white'}`}>
            {on === 1 && <svg width="9" height="9" viewBox="0 0 9 9"><path d="M1 4.500l2.500 2.500L8 2" fill="none" stroke="#111" strokeWidth="1.400" /></svg>}
          </span>
          {s}
        </span>
      ))}
    </div>
  </div>
);

const ghMenu = ['File', 'Edit', 'View', 'Display', 'Solution', 'Help'];
// per-tab nudges, the original's tab spacing isn't even
const ghTabs = [
  ['Prm', ''], ['Math', '-ml-[2px]'], ['Set', ''], ['Vec', ''], ['Crv', ''], ['Srf', ''], ['Msh', ''], ['Int', ''], ['Trns', ''], ['Dis', ''],
  ['DIVA 4', 'ml-[2px]'], ['Fly', ''], ['M+', ''], ['Mosquito', ''], ['Wb', '-ml-[3px]'], ['Bowerbird', '-ml-[2px]'], ['Pufferfish', '-ml-[5px]'], ['Millipede', '-ml-[4px]'], ['Kanga', '-ml-[2px]'],
];

const Grasshopper = () => (
  <div className={`flex-1 h-[718px] flex flex-col bg-[#262626] text-[11.500px] ${UI}`}>
    <div className="h-[710px] border-l-2 border-[#0078d7] flex flex-col bg-[#f0f0f0] overflow-hidden">
      <div className="h-[31px] shrink-0 bg-[#0078d7] flex items-center pl-[7px] pt-[1px] text-white">Grasshopper - FINAL new</div>
      <div className="h-[27px] shrink-0 flex items-center pl-[12px] gap-[19px] text-[#222]">
        {ghMenu.map((m) => <span key={m}>{m}</span>)}
      </div>
      <div className="h-[22px] shrink-0 flex items-end pl-[8px] gap-[15.500px] text-[#777] whitespace-nowrap leading-[18px]">
        {ghTabs.map(([t, nudge]) => (
          <span key={t} className={t === 'Set' ? 'bg-white text-[#222] border-x border-t border-[#aaa] rounded-t-[6px] px-[7px] h-[22px] -ml-[10px] -mr-[7px] relative top-[1px]' : nudge}>{t}</span>
        ))}
      </div>
      <div className="h-[75px] shrink-0 flex items-start pl-[2px] gap-[3px] pt-[2px]">
        <Panel label="List" className="w-[343px]">
          <RibbonGroup rows={listIcons} cols={6} />
          <div className="ml-[2px]"><RibbonGroup rows={listB} cols={3} /></div>
          <div className="ml-[2px]"><RibbonGroup rows={[[yellowDiamond], [tanBox]]} cols={1} /></div>
          <div className="ml-[2px]"><RibbonGroup rows={[[netDots], [redBars]]} cols={1} sep={false} /></div>
        </Panel>
        <Panel label="Sequence" className="w-[192px]">
          <div className="ml-[3px]"><RibbonGroup rows={[seqIcons[0].slice(0, 2), seqIcons[1].slice(0, 2)]} cols={2} /></div>
          <div className="ml-[2px]"><RibbonGroup rows={[seqIcons[0].slice(2), seqIcons[1].slice(2)]} cols={3} /></div>
          <div className="ml-[2px]"><RibbonGroup rows={[[wave], [catBox]]} cols={1} sep={false} /></div>
        </Panel>
        <Panel label="Sets" className="w-[220px]">
          <div className="ml-[3px]"><RibbonGroup rows={[setTiles[0].slice(0, 3), setTiles[1].slice(0, 3)]} cols={3} /></div>
          <div className="ml-[10px]"><RibbonGroup rows={[setTiles[0].slice(3), setTiles[1].slice(3)]} cols={3} /></div>
          <div className="ml-[11px]"><RibbonGroup rows={[[people], [dotsX]]} cols={1} sep={false} /></div>
        </Panel>
        <Panel label="" className="w-[40px]">
          <div className="pl-[1px]">
            <RibbonGroup
              rows={[
                [<path d="M3 22l5-9 1-7 5-4 4 5-3 5 6 10h-3l-5-7-4 2-3 5z" fill="#5a0f14" />],
                [<g><Txt x="1" y="21" s={14} w={700}>A</Txt><text x="13" y="21" fontSize="14" fontStyle="italic" fontFamily="Liberation Serif, serif" fill="#111">b</text><path d="M3 7l2 4M9 3v6M15 6l-2 4" stroke="#111" /></g>],
              ]}
              cols={1}
              sep={false}
            />
          </div>
        </Panel>
      </div>
      <div className="h-[13px] shrink-0 border-b border-[#a0a0a0]" />
      <div className="h-[32px] shrink-0 bg-white flex items-center pl-[3px]">
        <Ico size={24}><g><path d="M2 4h8l2 3h9v15H2z" fill="#6db84f" stroke="#2e6a20" /><path d="M2 4h8l2 3H4v15H2z" fill="#d6ead0" /></g></Ico>
        <span className="w-[6px]" />
        <Ico size={24}><g><rect x="2" y="2" width="20" height="20" rx="2" fill="#3a7fdc" stroke="#173f86" /><rect x="6" y="2" width="12" height="7" fill="#cfe0f6" /><rect x="6" y="14" width="12" height="8" fill="#e8eef8" /><rect x="9" y="15" width="3" height="6" fill="#3a6fb8" /></g></Ico>
        <span className="ml-[7px] h-[22px] border-l border-[#bbb]" />
        <div className="ml-[4px] w-[136px] h-[23px] border border-[#888] flex items-center justify-between pl-[2px] pr-[6px] text-[#222]">
          63%
          <svg width="10" height="6" viewBox="0 0 10 6"><path d="M1 1l4 4 4-4" fill="none" stroke="#555" /></svg>
        </div>
        <span className="w-[5px]" />
        <Ico size={25}><g stroke="#222" strokeWidth="3" fill="none"><path d="M2 8V2h6M16 2h6v6M2 16v6h6M22 16v6h-6" /></g><path d="M10 10l4 4M14 10l-4 4" stroke="#222" strokeWidth="1.500" /></Ico>
        <span className="ml-[4px] w-0 h-0 border-x-[3px] border-x-transparent border-t-[3px] border-t-[#222]" />
        <span className="w-[7px]" />
        <Ico size={26}><g><path d="M1 12C6 4 18 4 23 12 18 20 6 20 1 12z" fill="#e8f4fb" stroke="#234" /><circle cx="12" cy="12" r="6" fill="#3fa9dc" /><circle cx="12" cy="12" r="3" fill="#123" /></g></Ico>
        <span className="ml-[4px] w-0 h-0 border-x-[3px] border-x-transparent border-t-[3px] border-t-[#222]" />
        <span className="w-[6px]" />
        <Ico size={24}><g><path d="M3 20c4 3 5-4 8-4l9-13 3 3-10 13-3-3" fill="#e34a3a" stroke="#6a1a10" strokeWidth="0.600" /><path d="M1 14c2 0 2 5 5 6" fill="none" stroke="#333" strokeWidth="1.200" /></g></Ico>
      </div>
      <Canvas />
      <div className="h-[2px] shrink-0 bg-white" />
      <div className="h-[22px] shrink-0 bg-[#f0f0f0] flex items-center pl-[3px] gap-[3px] text-[#333]">
        <svg width="16" height="16" viewBox="0 0 16 16"><circle cx="8" cy="8" r="7.500" fill="#2a5fc8" stroke="#143a86" /><circle cx="8" cy="8" r="5" fill="#9dbcf0" /><rect x="7" y="3.500" width="2" height="6" fill="#123a8a" /><rect x="7" y="10.500" width="2" height="2" fill="#123a8a" /></svg>
        Save successfully completed... (31 seconds ago)
      </div>
    </div>
  </div>
);

const statusLeft = [
  ['CPlane', 'w-[49px]'], ['x 103.566', 'w-[88px]'], ['y 31.322', 'w-[88px]'], ['z 0.000', 'w-[88px]'], ['Millimeters', 'w-[88px]'],
];
const statusBtns = [
  ['Grid Snap', 'w-[65px]'], ['Ortho', 'w-[44px]'], ['Planar', 'w-[47px]'], ['Osnap', 'w-[48px]'], ['SmartTrack', 'w-[73px]'],
];
const statusOff = [['Gumball', 'w-[59px]'], ['Record History', 'w-[93px]'], ['Filter', 'w-[39px]']];

const StatusBar = () => (
  <div className={`h-[20px] flex border-t border-[#9a9a9a] bg-[#262626] text-[11.500px] text-[#e4e4e4] leading-none ${UI}`}>
    {statusLeft.map(([t, w]) => (
      <span key={t} className={`${w} shrink-0 border-r border-[#9a9a9a] flex items-center justify-center`}>{t}</span>
    ))}
    <span className="w-[169px] shrink-0 flex items-center pl-[3px] gap-[2px]">
      <span className="w-[13px] h-[13px] bg-black border border-white" />
      Default
    </span>
    {statusBtns.map(([t, w]) => (
      <span key={t} className={`${w} shrink-0 bg-[#e5f1fb] text-[#111] font-bold border-r border-[#9a9a9a] flex items-center justify-center`}>{t}</span>
    ))}
    {statusOff.map(([t, w]) => (
      <span key={t} className={`${w} shrink-0 border-r border-[#9a9a9a] flex items-center justify-center`}>{t}</span>
    ))}
    <span className="w-[319px] shrink-0 border-r border-[#9a9a9a] flex items-center pl-[1px]">Available physical memory: 5427 MB</span>
  </div>
);

export default function App() {
  return (
    <div className="w-[1365px] h-[738px] overflow-hidden flex flex-col bg-[#262626]">
      <div className="flex h-[718px]">
        <Rhino />
        <Grasshopper />
      </div>
      <StatusBar />
    </div>
  );
}
